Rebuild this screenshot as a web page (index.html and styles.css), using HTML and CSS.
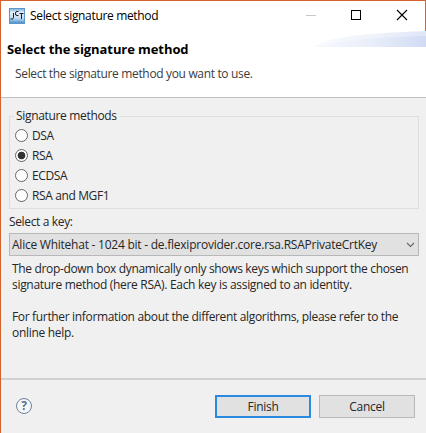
FILE: index.html
```html
<!DOCTYPE html>
<html lang="en">
<head>
<meta charset="utf-8">
<title>Select signature method</title>
<link rel="stylesheet" href="styles.css">
</head>
<body>
<main class="dialog">
  <div class="titlebar">
    <svg class="app-icon" width="16" height="16" viewBox="0 0 16 16">
      <defs><linearGradient id="tile" x1="0" y1="0" x2="0" y2="1"><stop offset="0" stop-color="#6fa9d8"/><stop offset=".25" stop-color="#e3eef8"/><stop offset=".65" stop-color="#c4dcf0"/><stop offset="1" stop-color="#4389c8"/></linearGradient></defs>
      <rect x=".5" y=".5" width="15" height="15" fill="url(#tile)" stroke="#5d97c8"/>
      <path d="M4.500 5v4.500q0 1.500-1.500 1.500H1.500M9.500 3.500H8q-1.500 0-1.500 1.500v1q0 1.500 1.500 1.500h1.500M10.500 5.500h4M12.500 5.500V11" fill="none" stroke="#17202c"/>
    </svg>
    <span class="caption">Select signature method</span>
    <svg class="controls" width="102" height="12" viewBox="0 0 102 12" shape-rendering="crispEdges">
      <path d="M0 6.500h10" stroke="#c8c8c8"/>
      <rect x="45.500" y="1.500" width="9" height="9" fill="none" stroke="#000"/>
      <path d="M91 1l10 10M101 1L91 11" stroke="#000" stroke-width="1.100" shape-rendering="auto"/>
    </svg>
  </div>
  <header class="banner">
    <svg class="swoosh" width="111" height="16" viewBox="0 0 111 16">
      <defs><linearGradient id="sky" x1="0" x2="1" y1="0" y2="0"><stop offset="0" stop-color="#f6f8fd"/><stop offset=".5" stop-color="#e7edf9"/><stop offset="1" stop-color="#cdd8f3"/></linearGradient></defs>
      <path d="M0 16Q12 3 111 0V16Z" fill="url(#sky)" opacity=".65"/>
      <path d="M0 16Q30 7 111 5V16Z" fill="url(#sky)" opacity=".8"/>
    </svg>
    <h1 class="heading">Select the signature method</h1>
    <p class="intro">Select the signature method you want to use.</p>
  </header>
  <section class="content">
    <fieldset class="methods">
      <legend class="legend">Signature methods</legend>
      <label class="option"><i class="radio"></i><span>DSA</span></label>
      <label class="option"><i class="radio checked"></i><span>RSA</span></label>
      <label class="option"><i class="radio"></i><span>ECDSA</span></label>
      <label class="option"><i class="radio"></i><span>RSA and MGF1</span></label>
    </fieldset>
    <div class="key-label">Select a key:</div>
    <div class="combo">
      <span class="value">Alice Whitehat - 1024 bit - de.flexiprovider.core.rsa.RSAPrivateCrtKey</span>
      <svg width="9" height="6" viewBox="0 0 9 6"><path d="M1 1l3.500 3.500L8 1" fill="none" stroke="#666" stroke-width="1.100"/></svg>
    </div>
    <p class="note"><span class="wide-line">The drop-down box dynamically only shows keys which support the chosen</span><br>signature method (here RSA). Each key is assigned to an identity.</p>
    <p class="note"><span class="wide-line">For further information about the different algorithms, please refer to the</span><br>online help.</p>
  </section>
  <footer class="footer">
    <span class="help">?</span>
    <div class="button primary">Finish</div>
    <div class="button">Cancel</div>
  </footer>
</main>
</body>
</html>
```
FILE: styles.css
```css
* { box-sizing: border-box; }
body { margin: 0; }
.dialog {
  width: 426px; height: 433px; display: flex; flex-direction: column;
  background: #f0f0f0; border-left: 1px solid #d3622c; overflow: hidden;
  font: 12px/16px "Open Sans", "Noto Sans", sans-serif; color: #262626;
  letter-spacing: -.3px; white-space: nowrap;
}
.titlebar {
  height: 31px; flex: none; display: flex; align-items: center; padding: 0 17px 0 8px;
  background: #fff; border-top: 1px solid #d3622c; border-right: 1px solid #d3622c;
}
.app-icon { margin-top: -1px; }
.caption { margin-left: 5px; color: #000; letter-spacing: -.34px; }
.controls { margin-left: auto; margin-top: -2px; }
.banner {
  position: relative; height: 67px; flex: none; padding: 9px 0 0 6px;
  background: #fff; border-bottom: 1px solid #c0c0c0;
}
.swoosh { position: absolute; right: 0; top: 0; }
.heading { margin: 0; font-size: 13px; line-height: 18px; font-weight: 700; color: #000; letter-spacing: -.08px; }
.intro { margin: 8px 0 0 8px; color: #3c3c3c; letter-spacing: -.34px; }
.content { height: 280px; flex: none; padding: 10px 7px 0 8px; }
.methods { margin: 0; padding: 0 0 0 4px; height: 101px; border: 1px solid #dedede; }
.legend { margin: 0; padding: 0 2px; height: 16px; line-height: 16px; letter-spacing: -.33px; }
.option { display: flex; align-items: center; height: 20px; letter-spacing: -.38px; }
.option span { padding-top: 1px; }
.methods .option:first-of-type { margin-top: 1px; }
.radio { width: 13px; height: 13px; border: 1px solid #666; border-radius: 50%; background: #fff; margin: 0 4px 0 1px; }
.checked { background: radial-gradient(circle, #333 0 3.500px, #fff 4.200px); }
.key-label { margin-top: 5px; height: 19px; letter-spacing: -.35px; }
.combo {
  height: 23px; display: flex; align-items: center; justify-content: space-between;
  padding: 0 3px 0 2px; background: #e1e1e1; border: 1px solid #b8b8b8;
}
.value { letter-spacing: -.24px; }
.note { margin: 5px 0 16px 3px; }
.note + .note { margin-top: 0; }
.wide-line { letter-spacing: -.335px; }
.footer { flex: 1; display: flex; align-items: flex-start; border-top: 2px solid #d0d0d0; padding: 15px 11px 0 15px; }
.help {
  width: 16px; height: 16px; margin: 3px auto 0 0; border: 1px solid #71839b; border-radius: 50%;
  color: #5b7090; font-weight: 700; line-height: 14px; text-align: center; background: #f4f6f8;
}
.button {
  width: 96px; height: 23px; margin-left: 8px; padding-top: 1px; display: flex; align-items: center; justify-content: center;
  background: #e1e1e1; border: 1px solid #b8b8b8;
}
.primary { border: 2px solid #298ae0; }
```
